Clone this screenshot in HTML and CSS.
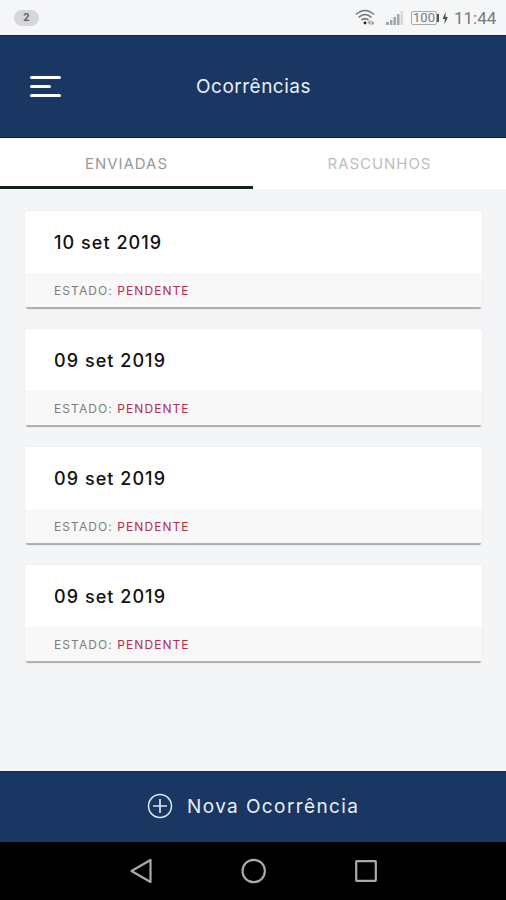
FILE: index.html
```html
<!DOCTYPE html>
<html lang="pt">
<head>
<meta charset="utf-8">
<title>Ocorrências</title>
<link rel="stylesheet" href="styles.css">
</head>
<body>
<div class="status">
  <span class="badge">2</span>
  <div class="status-right">
    <svg class="wifi" width="22" height="18" viewBox="0 0 22 18" fill="none" stroke="#707274" stroke-width="1.5">
      <path d="M1 5.5Q10 -2.500 19 5.500M3.500 8.500Q10 2.500 16.500 8.500M6.500 11.200Q10 8 13.500 11.200"/>
      <circle cx="10" cy="14" r="1.400" fill="#222" stroke="none"/>
      <path d="M12.500 13.500l3-2.500v5zM19.500 14l-3-2.500v5z" fill="#999" stroke="none"/>
    </svg>
    <svg class="signal" width="18" height="16" viewBox="0 0 18 16" fill="#a2a4a5">
      <path d="M0 12h3v3H0zM4 10h2.500v5H4zM7.500 7h2.500v8H7.500zM11 4h2.500v11H11z"/><path d="M14.500 1h2.500v14h-2.500z" fill="#d5d6d7"/>
    </svg>
    <span class="battery">100</span>
    <svg class="charge" width="12" height="14" viewBox="0 0 12 14" fill="#555"><path d="M0 3h2v8H0zM8.500 1L5.500 8h2.300L7.500 13 11 6H8.700z"/></svg>
    <span class="clock">11:44</span>
  </div>
</div>
<header class="header">
  <svg class="menu" width="32" height="24" viewBox="0 0 32 24" stroke="#fff" stroke-width="3" stroke-linecap="round"><path d="M2.500 2.500h28M2.500 11.500h18M2.500 20.500h28"/></svg>
  <h1 class="title">Ocorrências</h1>
</header>
<nav class="tabs">
  <div class="tab active">ENVIADAS</div>
  <div class="tab">RASCUNHOS</div>
</nav>
<main class="list">
  <article class="card"><h2 class="date">10 set 2019</h2><p class="state">ESTADO: <span class="pending">PENDENTE</span></p></article>
  <article class="card"><h2 class="date">09 set 2019</h2><p class="state">ESTADO: <span class="pending">PENDENTE</span></p></article>
  <article class="card"><h2 class="date">09 set 2019</h2><p class="state">ESTADO: <span class="pending">PENDENTE</span></p></article>
  <article class="card"><h2 class="date">09 set 2019</h2><p class="state">ESTADO: <span class="pending">PENDENTE</span></p></article>
</main>
<footer class="action">
  <svg width="26" height="26" viewBox="0 0 26 26" fill="none" stroke="#dce5f2" stroke-width="1.500"><circle cx="13" cy="13" r="11.500"/><path d="M13 6v14M6 13h14" stroke-width="1.700"/></svg>
  <span class="action-label">Nova Ocorrência</span>
</footer>
<div class="navbar">
  <svg width="24" height="26" viewBox="0 0 24 26" fill="none" stroke="#aaa" stroke-width="2.200" stroke-linejoin="round"><path d="M21.500 2v22L2.500 13z"/></svg>
  <svg width="26" height="26" viewBox="0 0 26 26" fill="none" stroke="#aaa" stroke-width="2.200"><circle cx="12.700" cy="13" r="11.200"/></svg>
  <svg width="24" height="24" viewBox="0 0 24 24" fill="none" stroke="#aaa" stroke-width="2.200"><rect x="2.200" y="2.200" width="19.600" height="19.600" rx=".5"/></svg>
</div>
</body>
</html>
```
FILE: styles.css
```css
* { box-sizing: border-box; margin: 0; padding: 0; }
body { width: 506px; height: 900px; display: flex; flex-direction: column; overflow: hidden; background: #f3f5f7; font-family: Inter, sans-serif; }
.status { height: 35px; display: flex; align-items: center; justify-content: space-between; padding: 0 11px 0 14px; background: #f5f6f8; }
.badge { width: 25px; height: 16px; border-radius: 8px; background: #d6d7d8; color: #666; font: bold 11px/16px Roboto, sans-serif; text-align: center; }
.status-right { display: flex; align-items: center; color: #77797b; }
.signal { margin: 0 7px 0 9px; }
.battery { width: 26px; height: 14px; border: 1px solid #aaa; border-radius: 2px; font: 13px/12px Roboto, sans-serif; text-align: center; }
.charge { margin: 0 5px 0 0; }
.clock { font: 17px/20px Roboto, sans-serif; width: 41px; white-space: nowrap; }
.header { height: 103px; display: flex; align-items: center; padding-left: 29px; background: #1a3662; border-top: 1px solid #0d2856; border-bottom: 1px solid #03134b; }
.title { margin-left: 135px; font-size: 19px; line-height: 24px; font-weight: 400; letter-spacing: .5px; color: #e9eef5; }
.tabs { height: 51px; display: flex; background: #fff; }
.tab { width: 253px; text-align: center; font-size: 15px; line-height: 52px; letter-spacing: .95px; color: #bdbdbd; }
.active { color: #999; border-bottom: 3px solid #14241d; }
.list { flex: 1; display: flex; flex-direction: column; gap: 22.1px; padding: 22px 24px 0 25px; }
.card { height: 96px; border-radius: 3px; background: #fff; box-shadow: 0 0 2px #e6e7e9, 0 2.5px 1px -1px #a0a1a2; overflow: hidden; flex: none; }
.date { height: 62px; padding-left: 29px; font-size: 18px; line-height: 63px; font-weight: 500; letter-spacing: 1.05px; color: #111; }
.state { height: 34px; padding-left: 29px; background: #f8f8f8; font-size: 12px; line-height: 35px; letter-spacing: 1.08px; color: #7d7d7d; white-space: nowrap; }
.pending { color: #b52c4e; }
.action { height: 71px; display: flex; align-items: center; padding: 0 0 2px 147px; gap: 14px; background: #1a3662; border-top: 1px solid #102956; }
.action-label { padding-top: 1px; font-size: 19px; line-height: 24px; letter-spacing: 1.4px; color: #e9eef5; }
.navbar { height: 58px; display: flex; align-items: center; justify-content: space-between; padding: 0 128px 0 129px; background: #000; }
```
